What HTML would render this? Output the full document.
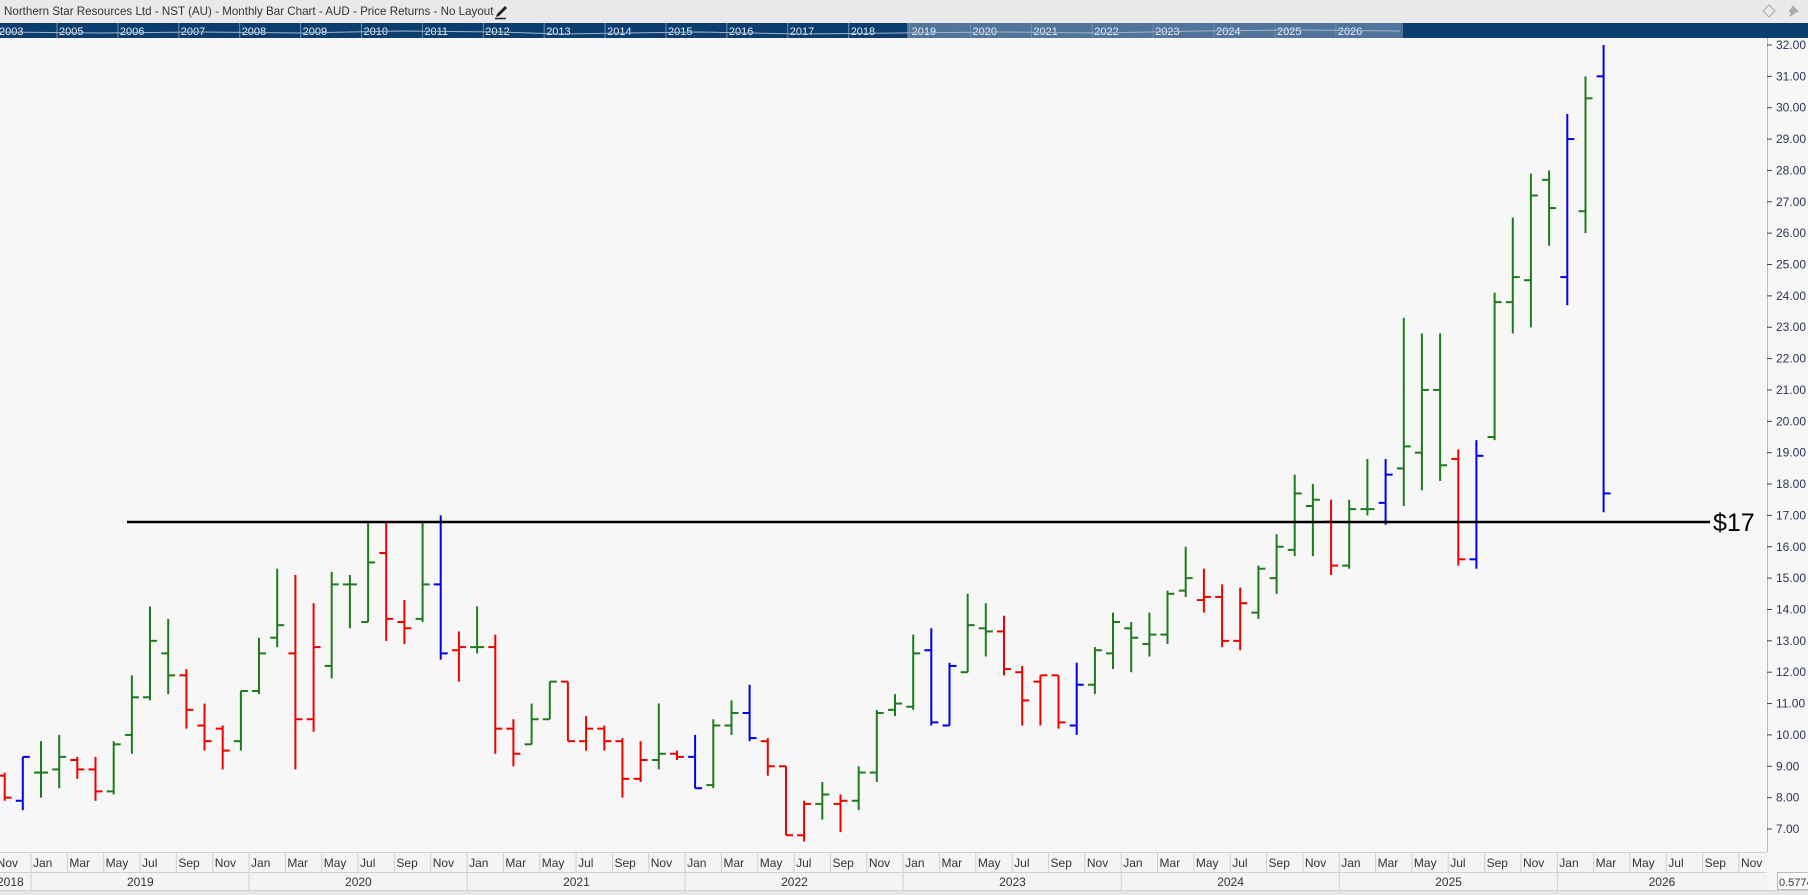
<!DOCTYPE html>
<html><head><meta charset="utf-8">
<style>
*{margin:0;padding:0;box-sizing:border-box}
body{width:1808px;height:895px;overflow:hidden;background:#f7f7f7;font-family:"Liberation Sans","DejaVu Sans",sans-serif;position:relative}
#title{position:absolute;left:0;top:0;width:1808px;height:23px;background:#e9e9e9;font-size:11.6px;color:#333;line-height:23px;padding-left:4px}
#nav{position:absolute;left:0;top:23px;width:1808px;height:15px;background:#0b3d6e}
svg{position:absolute;left:0;top:0}
</style></head><body>
<div id="title">Northern Star Resources Ltd - NST (AU) - Monthly Bar Chart - AUD - Price Returns - No Layout</div>
<div id="nav"></div>
<svg id="s" width="1808" height="895" xmlns="http://www.w3.org/2000/svg" font-family="Liberation Sans, DejaVu Sans, sans-serif"></svg>
<script>
var s=document.getElementById('s'),h='';
function Y(p){return 45+(32-p)*31.36;}
h+='<rect x="907" y="23" width="496" height="15" fill="#51749b"/>';
var ny=['2003'];for(var y=2005;y<=2026;y++)ny.push(''+y);
for(var i=0;i<ny.length;i++){var x=i==0?-1:59+(i-1)*60.9;
h+='<line x1="'+(x-2)+'" y1="23" x2="'+(x-2)+'" y2="38" stroke="#6f8fb3" stroke-width="1"/>';
h+='<text x="'+x+'" y="35" font-size="11" fill="#e8eef5">'+ny[i]+'</text>';}
h+='<polyline points="0,32 100,33 200,32 300,33 400,31 500,32 560,34 700,32 800,34 900,33 1000,32 1100,33 1200,31 1300,30 1400,31" fill="none" stroke="#9fb4cc" stroke-width="1"/>';
h+='<path d="M497 14 L505 6 L507 8 L499 16 L496 17 Z" fill="#222"/><line x1="495" y1="18.5" x2="506" y2="18.5" stroke="#222" stroke-width="1.5"/>';
h+='<path d="M1769 5 L1775 11 L1769 17 L1763 11 Z" fill="none" stroke="#aaa" stroke-width="1"/>';
h+='<path d="M1790 16 L1794 12 M1792 6 L1798 12 M1793 8 L1796 11 L1793 14 L1790 11 Z" stroke="#aaa" stroke-width="2" fill="#aaa"/>';
h+='<line x1="1767.5" y1="38" x2="1767.5" y2="852" stroke="#bbb"/>';
for(var p=7;p<=32;p++){var yy=Y(p);h+='<line x1="1767" y1="'+yy+'" x2="1772" y2="'+yy+'" stroke="#444"/><text x="1776" y="'+(yy+4)+'" font-size="12" fill="#2b3550">'+p+'.00</text>';}
h+='<rect x="0" y="852" width="1767" height="38" fill="#f4f4f4"/><rect x="0" y="890" width="1808" height="5" fill="#e6e6e6"/>';
h+='<line x1="0" y1="852.5" x2="1767" y2="852.5" stroke="#d0d0d0"/><line x1="0" y1="872.5" x2="1767" y2="872.5" stroke="#d0d0d0"/><line x1="0" y1="890.5" x2="1808" y2="890.5" stroke="#d0d0d0"/>';
var mn=['Jan','Mar','May','Jul','Sep','Nov'];
for(var m=-2;m<=94;m+=2){var x=32+m*18.17;if(x>1750)break;var lab=mn[((m%12)+12)%12/2];
h+='<line x1="'+(x-1)+'" y1="852" x2="'+(x-1)+'" y2="872" stroke="#d0d0d0"/><text x="'+(x+1)+'" y="867" font-size="12" fill="#333">'+lab+'</text>';}
for(var yr=2018;yr<=2026;yr++){var x0=32+(yr-2019)*12*18.17;var x1=Math.min(x0+218,1767);
h+='<line x1="'+(x0-1)+'" y1="872" x2="'+(x0-1)+'" y2="890" stroke="#d0d0d0"/>';
var cx=yr==2018?-3:(x0+x1)/2-14;h+='<text x="'+cx+'" y="886" font-size="12" fill="#333">'+yr+'</text>';}
h+='<rect x="1777.5" y="872.5" width="31" height="17" fill="#fafafa" stroke="#bbb"/><text x="1779" y="886" font-size="11" fill="#333">0.5774</text>';
var d=[[-2,7.9,8.8,8.7,8,'r'],[-1,7.6,9.3,7.9,9.3,'b'],[0,8,9.8,8.8,8.8,'g'],[1,8.3,10,8.9,9.3,'g'],[2,8.6,9.3,9.2,8.9,'r'],[3,7.9,9.3,8.9,8.2,'r'],[4,8.1,9.8,8.2,9.7,'g'],[5,9.4,11.9,10,11.2,'g'],[6,11.1,14.1,11.2,13,'g'],[7,11.3,13.7,12.6,11.9,'g'],[8,10.2,12.1,11.9,10.8,'r'],[9,9.5,11,10.3,9.8,'r'],[10,8.9,10.3,10.2,9.5,'r'],[11,9.5,11.4,9.8,11.4,'g'],[12,11.3,13.1,11.4,12.6,'g'],[13,12.8,15.3,13.1,13.5,'g'],[14,8.9,15.1,12.6,10.5,'r'],[15,10.1,14.2,10.5,12.8,'r'],[16,11.8,15.2,12.2,14.8,'g'],[17,13.4,15.1,14.8,14.8,'g'],[18,13.6,16.8,13.6,15.5,'g'],[19,13,16.8,15.8,13.7,'r'],[20,12.9,14.3,13.6,13.4,'r'],[21,13.6,16.8,13.7,14.8,'g'],[22,12.4,17,14.8,12.6,'b'],[23,11.7,13.3,12.7,12.8,'r'],[24,12.6,14.1,12.8,12.8,'g'],[25,9.4,13.2,12.8,10.2,'r'],[26,9,10.5,10.2,9.4,'r'],[27,9.7,11,9.7,10.5,'g'],[28,10.5,11.7,10.5,11.7,'g'],[29,9.8,11.7,11.7,9.8,'r'],[30,9.5,10.6,9.8,10.2,'r'],[31,9.5,10.3,10.2,9.8,'r'],[32,8,9.9,9.8,8.6,'r'],[33,8.5,9.8,8.6,9.2,'r'],[34,8.9,11,9.2,9.4,'g'],[35,9.2,9.5,9.4,9.3,'r'],[36,8.3,10,9.3,8.3,'b'],[37,8.3,10.5,8.4,10.3,'g'],[38,10,11.1,10.3,10.7,'g'],[39,9.8,11.6,10.7,9.9,'b'],[40,8.7,9.9,9.8,9,'r'],[41,6.8,9,9,6.8,'r'],[42,6.6,7.9,6.8,7.8,'r'],[43,7.3,8.5,7.8,8.1,'g'],[44,6.9,8.1,7.8,7.9,'r'],[45,7.6,9,7.9,8.8,'g'],[46,8.5,10.8,8.8,10.7,'g'],[47,10.6,11.3,10.8,11,'g'],[48,10.8,13.2,10.9,12.6,'g'],[49,10.3,13.4,12.7,10.4,'b'],[50,10.3,12.3,10.3,12.2,'b'],[51,12,14.5,12,13.5,'g'],[52,12.5,14.2,13.4,13.3,'g'],[53,11.9,13.8,13.3,12.1,'r'],[54,10.3,12.2,12,11.1,'r'],[55,10.3,11.9,11.7,11.9,'r'],[56,10.2,11.9,11.9,10.4,'r'],[57,10,12.3,10.3,11.6,'b'],[58,11.3,12.8,11.6,12.7,'g'],[59,12.1,13.9,12.6,13.6,'g'],[60,12,13.6,13.4,13.1,'g'],[61,12.5,13.9,12.9,13.2,'g'],[62,12.9,14.6,13.2,14.5,'g'],[63,14.4,16,14.6,15,'g'],[64,13.9,15.3,14.3,14.4,'r'],[65,12.8,14.8,14.4,13,'r'],[66,12.7,14.7,13,14.2,'r'],[67,13.7,15.4,13.9,15.3,'g'],[68,14.5,16.4,15,16,'g'],[69,15.7,18.3,15.9,17.7,'g'],[70,15.7,18,17.3,17.5,'g'],[71,15.1,17.5,16.8,15.4,'r'],[72,15.3,17.5,15.4,17.2,'g'],[73,17,18.8,17.2,17.2,'g'],[74,16.7,18.8,17.4,18.3,'b'],[75,17.3,23.3,18.5,19.2,'g'],[76,17.8,22.8,19,21,'g'],[77,18.1,22.8,21,18.6,'g'],[78,15.4,19.1,18.8,15.6,'r'],[79,15.3,19.4,15.6,18.9,'b'],[80,19.4,24.1,19.5,23.8,'g'],[81,22.8,26.5,23.8,24.6,'g'],[82,23,27.9,24.5,27.2,'g'],[83,25.6,28,27.7,26.8,'g'],[84,23.7,29.8,24.6,29,'b'],[85,26,31,26.7,30.3,'g'],[86,17.1,32,31,17.7,'b']];
var col={r:'#ee0000',g:'#1f7a1f',b:'#0000ee'};
d.forEach(function(b){var x=(41+b[0]*18.17).toFixed(1),c=col[b[5]];
h+='<line x1="'+x+'" y1="'+Y(b[2])+'" x2="'+x+'" y2="'+Y(b[1])+'" stroke="'+c+'" stroke-width="2"/>';
h+='<line x1="'+(x-7)+'" y1="'+Y(b[3])+'" x2="'+x+'" y2="'+Y(b[3])+'" stroke="'+c+'" stroke-width="2"/>';
h+='<line x1="'+x+'" y1="'+Y(b[4])+'" x2="'+(+x+7)+'" y2="'+Y(b[4])+'" stroke="'+c+'" stroke-width="2"/>';});
h+='<line x1="127" y1="522" x2="1710" y2="522" stroke="#000" stroke-width="2.5"/><text x="1713" y="531" font-size="25" fill="#000">$17</text>';
s.innerHTML=h;
</script>
</body></html>
